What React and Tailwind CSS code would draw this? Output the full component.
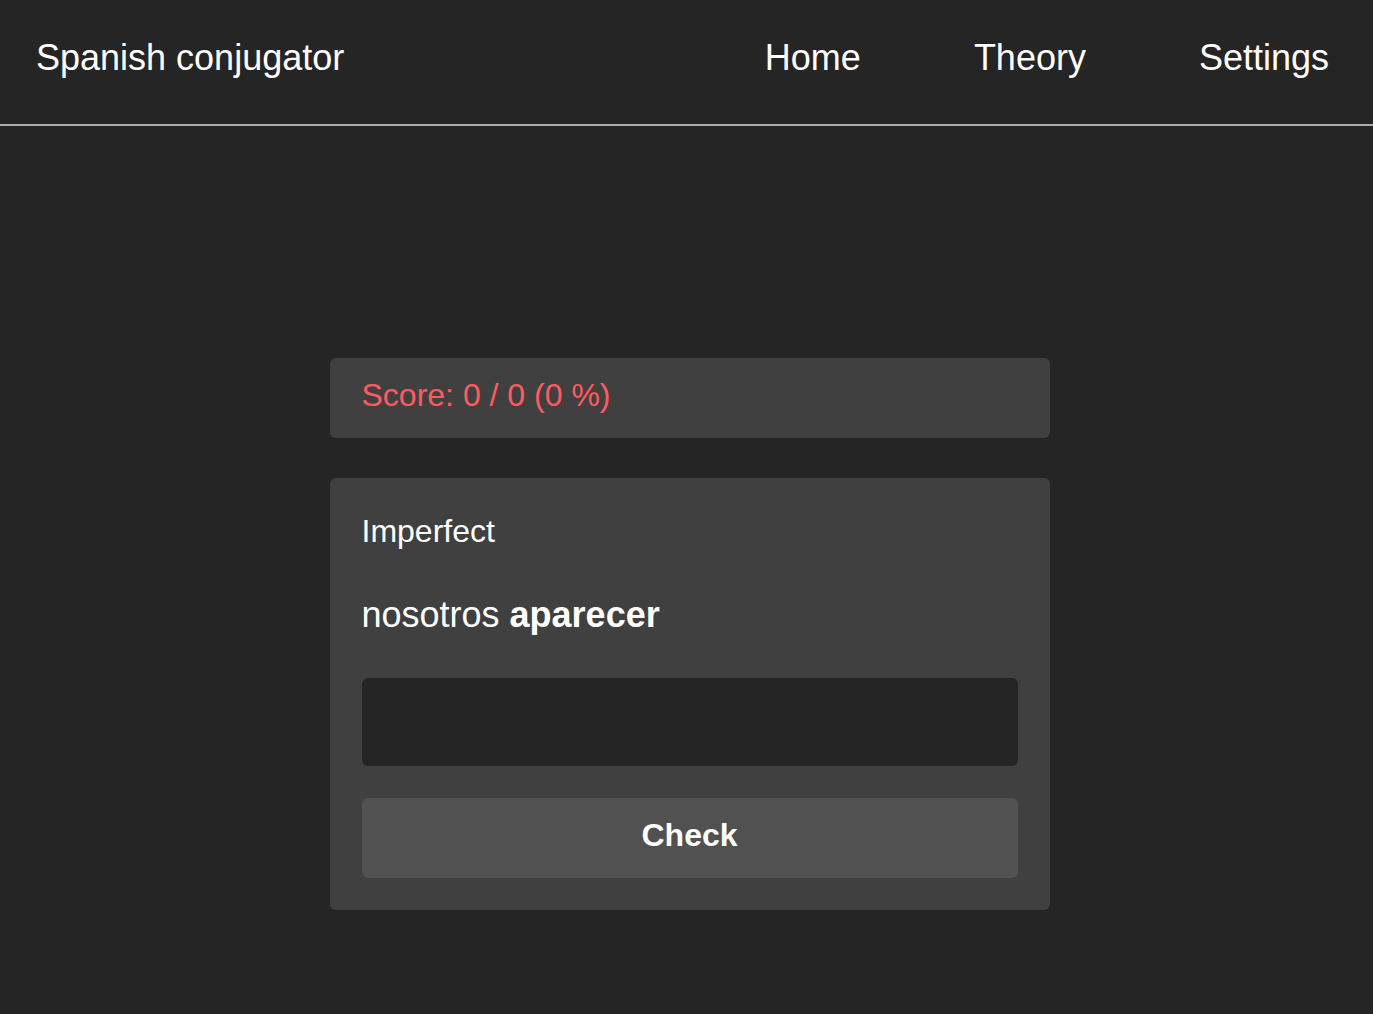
export default function App() {
  const font = { fontFamily: '"Liberation Sans", Arial, sans-serif' };
  return (
    <div className="min-h-[1014px] bg-[#252525] text-white" style={font}>
      <header className="h-[126px] border-b-2 border-[#aaaaaa] flex items-start justify-between pl-[36px] pr-[44px] pt-[37px]">
        <div className="text-[36px] leading-[1.15]">Spanish conjugator</div>
        <nav className="flex gap-[113px] text-[36px] leading-[1.15]">
          <a className="block">Home</a>
          <a className="block">Theory</a>
          <a className="block">Settings</a>
        </nav>
      </header>
      <main className="flex flex-col items-center pt-[232px] pl-[6px]">
        <div className="w-[720px] h-[80px] rounded-[6px] bg-[#404040] px-[32px] pt-[19px]">
          <div className="text-[32px] leading-[1.15] text-[#ff5a5f]">Score: 0 / 0 (0 %)</div>
        </div>
        <div className="w-[720px] mt-[40px] rounded-[6px] bg-[#404040] px-[32px] pt-[35px] pb-[32px]">
          <div className="text-[32px] leading-[1.15]">Imperfect</div>
          <div className="text-[36px] leading-[1.15] mt-[44px]">
            nosotros <span className="font-bold">aparecer</span>
          </div>
          <input
            className="block w-full h-[88px] mt-[43px] rounded-[6px] bg-[#252525] outline-none text-[32px] px-4 text-white"
            type="text"
          />
          <button className="block w-full h-[80px] mt-[32px] rounded-[6px] bg-[#515151] text-[32px] font-bold text-white pb-[6px]">
            Check
          </button>
        </div>
      </main>
    </div>
  );
}
